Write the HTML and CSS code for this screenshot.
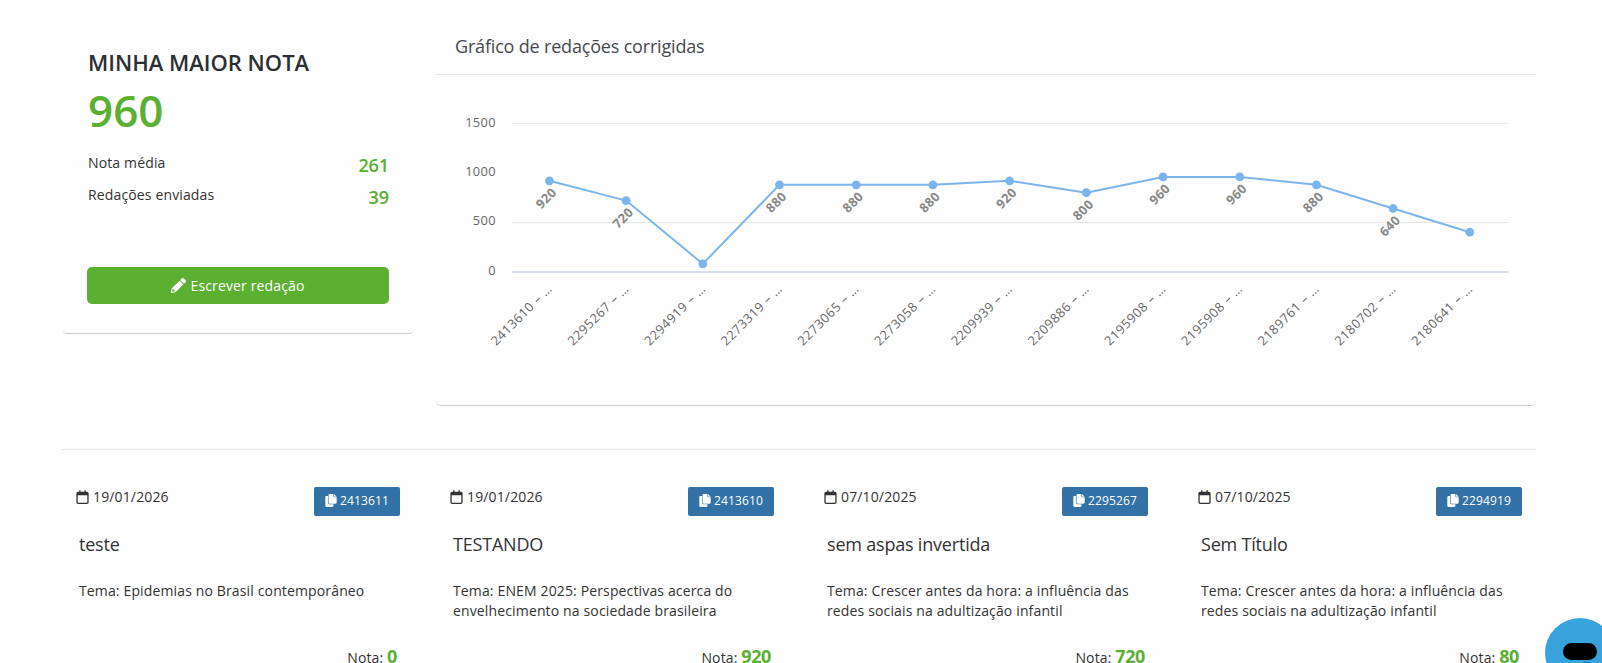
FILE: index.html
```
<!DOCTYPE html>
<html lang="pt-BR">
<head>
  <meta charset="UTF-8">
  <title>Minhas redações</title>
  <meta name="viewport" content="width=device-width, initial-scale=1.0">
  <link rel="stylesheet" href="styles.css">
</head>
<body>

<svg class="sprite" width="0" height="0">
  <symbol id="i-calendar" viewBox="0 0 448 512">
    <path fill-rule="evenodd" d="M128 0c13 0 24 11 24 24v40h144V24c0-13 11-24 24-24s24 11 24 24v40h40c35 0 64 29 64 64v320c0 35-29 64-64 64H64c-35 0-64-29-64-64V128c0-35 29-64 64-64h40V24c0-13 11-24 24-24zM400 192H48v256c0 9 7 16 16 16h320c9 0 16-7 16-16z"/>
  </symbol>
  <symbol id="i-copy" viewBox="0 0 448 512">
    <path d="M176 0h144v96c0 18 14 32 32 32h96v208c0 26-22 48-48 48H176c-26 0-48-22-48-48V48c0-26 22-48 48-48zM344 0l104 104h-104z"/>
    <path d="M48 80h56v256c0 40 32 72 72 72h144v56c0 26-22 48-48 48H48c-26 0-48-22-48-48V128c0-26 22-48 48-48z"/>
  </symbol>
  <symbol id="i-pencil" viewBox="0 0 512 512">
    <path d="M498 142l-46 46c-5 5-12 5-17 0L324 77c-5-5-5-12 0-17l46-46c19-19 49-19 68 0l60 60c19 19 19 49 0 68zM284 100L22 362 0 484c-3 16 12 31 28 28l122-22 262-262c5-5 5-12 0-17L301 100c-5-5-12-5-17 0zM88 424h48v36l-65 11-30-30 11-65h36z"/>
  </symbol>
</svg>

<div class="container">

  <div class="top">
    <!-- Resumo das notas -->
    <section class="card summary">
      <h2 class="summary-title">MINHA MAIOR NOTA</h2>
      <div class="summary-score">960</div>
      <div class="summary-row">
        <span>Nota média</span>
        <strong>261</strong>
      </div>
      <div class="summary-row">
        <span>Redações enviadas</span>
        <strong>39</strong>
      </div>
      <a class="btn-write" href="#"><svg class="icon-pencil"><use href="#i-pencil"/></svg>Escrever redação</a>
    </section>

    <!-- Gráfico -->
    <section class="card chart-card">
      <h3 class="chart-title">Gráfico de redações corrigidas</h3>
      <svg class="chart" viewBox="0 0 1100 330" width="1100" height="330">
        <g class="grid">
          <path d="M76 48.5H1072M76 147.5H1072"/>
          <path class="axis" d="M76 197H1073"/>
        </g>
        <g class="y-labels">
          <text x="60" y="52">1500</text>
          <text x="60" y="101">1000</text>
          <text x="60" y="150">500</text>
          <text x="60" y="200">0</text>
        </g>
        <polyline class="line" points="113.4,105.8 190.1,125.6 266.8,188.9 343.5,109.8 420.2,109.8 496.9,109.8 573.6,105.8 650.3,117.7 727,101.9 803.7,101.9 880.4,109.8 957.1,133.5 1033.8,157.2"/>
        <g class="points">
          <circle cx="113.4" cy="105.8" r="4.4"/>
          <circle cx="190.1" cy="125.6" r="4.4"/>
          <circle cx="266.8" cy="188.9" r="4.4"/>
          <circle cx="343.5" cy="109.8" r="4.4"/>
          <circle cx="420.2" cy="109.8" r="4.4"/>
          <circle cx="496.9" cy="109.8" r="4.4"/>
          <circle cx="573.6" cy="105.8" r="4.4"/>
          <circle cx="650.3" cy="117.7" r="4.4"/>
          <circle cx="727" cy="101.9" r="4.4"/>
          <circle cx="803.7" cy="101.9" r="4.4"/>
          <circle cx="880.4" cy="109.8" r="4.4"/>
          <circle cx="957.1" cy="133.5" r="4.4"/>
          <circle cx="1033.8" cy="157.2" r="4.4"/>
        </g>
        <g class="values">
          <text transform="translate(121.4 118.3) rotate(-45)">920</text>
          <text transform="translate(198.1 138.1) rotate(-45)">720</text>
          <text transform="translate(351.5 122.3) rotate(-45)">880</text>
          <text transform="translate(428.2 122.3) rotate(-45)">880</text>
          <text transform="translate(504.9 122.3) rotate(-45)">880</text>
          <text transform="translate(581.6 118.3) rotate(-45)">920</text>
          <text transform="translate(658.3 130.2) rotate(-45)">800</text>
          <text transform="translate(735 114.4) rotate(-45)">960</text>
          <text transform="translate(811.7 114.4) rotate(-45)">960</text>
          <text transform="translate(888.4 122.3) rotate(-45)">880</text>
          <text transform="translate(965.1 146) rotate(-45)">640</text>
        </g>
        <g class="x-labels">
          <text transform="translate(117 214.5) rotate(-45)">2413610 – …</text>
          <text transform="translate(193.7 214.5) rotate(-45)">2295267 – …</text>
          <text transform="translate(270.4 214.5) rotate(-45)">2294919 – …</text>
          <text transform="translate(347.1 214.5) rotate(-45)">2273319 – …</text>
          <text transform="translate(423.8 214.5) rotate(-45)">2273065 – …</text>
          <text transform="translate(500.5 214.5) rotate(-45)">2273058 – …</text>
          <text transform="translate(577.2 214.5) rotate(-45)">2209939 – …</text>
          <text transform="translate(653.9 214.5) rotate(-45)">2209886 – …</text>
          <text transform="translate(730.6 214.5) rotate(-45)">2195908 – …</text>
          <text transform="translate(807.3 214.5) rotate(-45)">2195908 – …</text>
          <text transform="translate(884 214.5) rotate(-45)">2189761 – …</text>
          <text transform="translate(960.7 214.5) rotate(-45)">2180702 – …</text>
          <text transform="translate(1037.4 214.5) rotate(-45)">2180641 – …</text>
        </g>
      </svg>
    </section>
  </div>

  <hr class="divider">

  <!-- Redações -->
  <div class="essays">
    <article class="essay">
      <header class="essay-head">
        <span class="essay-date"><svg class="icon-cal"><use href="#i-calendar"/></svg>19/01/2026</span>
        <a class="essay-id" href="#"><svg class="icon-copy"><use href="#i-copy"/></svg>2413611</a>
      </header>
      <h4 class="essay-title">teste</h4>
      <p class="essay-theme">Tema: Epidemias no Brasil contemporâneo</p>
      <div class="essay-score">Nota: <strong>0</strong></div>
    </article>

    <article class="essay">
      <header class="essay-head">
        <span class="essay-date"><svg class="icon-cal"><use href="#i-calendar"/></svg>19/01/2026</span>
        <a class="essay-id" href="#"><svg class="icon-copy"><use href="#i-copy"/></svg>2413610</a>
      </header>
      <h4 class="essay-title">TESTANDO</h4>
      <p class="essay-theme">Tema: ENEM 2025: Perspectivas acerca do envelhecimento na sociedade brasileira</p>
      <div class="essay-score">Nota: <strong>920</strong></div>
    </article>

    <article class="essay">
      <header class="essay-head">
        <span class="essay-date"><svg class="icon-cal"><use href="#i-calendar"/></svg>07/10/2025</span>
        <a class="essay-id" href="#"><svg class="icon-copy"><use href="#i-copy"/></svg>2295267</a>
      </header>
      <h4 class="essay-title">sem aspas invertida</h4>
      <p class="essay-theme">Tema: Crescer antes da hora: a influência das redes sociais na adultização infantil</p>
      <div class="essay-score">Nota: <strong>720</strong></div>
    </article>

    <article class="essay">
      <header class="essay-head">
        <span class="essay-date"><svg class="icon-cal"><use href="#i-calendar"/></svg>07/10/2025</span>
        <a class="essay-id" href="#"><svg class="icon-copy"><use href="#i-copy"/></svg>2294919</a>
      </header>
      <h4 class="essay-title">Sem Título</h4>
      <p class="essay-theme">Tema: Crescer antes da hora: a influência das redes sociais na adultização infantil</p>
      <div class="essay-score">Nota: <strong>80</strong></div>
    </article>
  </div>

</div>

<!-- Assistente virtual -->
<button class="assistant" aria-label="Assistente">
  <svg viewBox="0 0 70 70" width="70" height="70">
    <circle cx="35" cy="35" r="35" fill="#37a2db"/>
    <rect x="18" y="25" width="34" height="17" rx="8.5"/>
    <rect x="38" y="44" width="8" height="3" rx="1.5" fill="#2b6c92"/>
  </svg>
</button>

</body>
</html>
```

FILE: styles.css
```
:root {
  --bg: #fefefe;
  --green: #5bb031;
  --blue: #3272a6;
  --text: #333;
  --line: #e7e7e7;
}

* { box-sizing: border-box; }

body {
  margin: 0;
  height: 663px;
  overflow: hidden;
  background: var(--bg);
  color: var(--text);
  font-family: "Open Sans", "Noto Sans", sans-serif;
  font-size: 14px;
  line-height: 20px;
  letter-spacing: 0.14px;
}

a { text-decoration: none; }

svg { fill: currentColor; }

.sprite { position: absolute; }

.container {
  width: 1474px;
  margin-left: 62px;
}

.top {
  display: flex;
  align-items: flex-start;
  gap: 22px;
}

.card {
  border: 0 solid #ccc;
  border-bottom-width: 1px;
  border-radius: 5px;
}

/* Resumo */

.summary {
  width: 352px;
  height: 334px;
  padding: 47px 25px 0;
}

.summary-title {
  margin: 0;
  padding-left: 1px;
  font-size: 22px;
  font-weight: 600;
  line-height: 30px;
  letter-spacing: 0;
  color: #2c2f33;
}

.summary-score {
  margin-top: 3px;
  padding-left: 1px;
  font-size: 44px;
  font-weight: 600;
  line-height: 60px;
  letter-spacing: 0;
  color: var(--green);
}

.summary-row {
  display: flex;
  justify-content: space-between;
  height: 32px;
  padding-left: 1px;
}

.summary-score + .summary-row { margin-top: 13px; }

.summary-row strong {
  padding-top: 2px;
  font-size: 18px;
  font-weight: 600;
  letter-spacing: -0.1px;
  color: var(--green);
}

.btn-write {
  display: flex;
  align-items: center;
  justify-content: center;
  gap: 4px;
  height: 37px;
  margin-top: 50px;
  border-radius: 5px;
  background: var(--green);
  color: #fff;
}

.icon-pencil {
  width: 15px;
  height: 15px;
}

/* Gráfico */

.chart-card {
  width: 1100px;
}

.chart-title {
  height: 75px;
  margin: 0;
  padding: 34px 19px 0;
  border-bottom: 1px solid var(--line);
  font-size: 18px;
  font-weight: 400;
  line-height: 25px;
  letter-spacing: -0.18px;
  color: #464a50;
}

.chart { display: block; }

.grid path {
  fill: none;
  stroke: #e6e6e6;
}

.grid .axis {
  stroke: #d9deeb;
  stroke-width: 2;
}

.line {
  fill: none;
  stroke: #7cb5ec;
  stroke-width: 2;
  stroke-linejoin: round;
}

.points { fill: #7cb5ec; }

.y-labels,
.x-labels {
  fill: #666;
  font-size: 12.8px;
  letter-spacing: 0.4px;
  text-anchor: end;
}

.x-labels { letter-spacing: 0.55px; }

.values {
  fill: #888;
  font-size: 12.8px;
  font-weight: 700;
  letter-spacing: 0.3px;
  text-anchor: end;
  stroke: var(--bg);
  stroke-width: 2px;
  paint-order: stroke;
}

/* Lista de redações */

.divider {
  height: 1px;
  margin: 43px 0 37px;
  border: 0;
  background: #e6e6e6;
}

.essays {
  display: grid;
  grid-template-columns: repeat(4, 324px);
  gap: 50px;
  padding-left: 14px;
}

.essay-head {
  display: flex;
  justify-content: space-between;
  height: 29px;
}

.essay-date {
  display: flex;
  align-items: center;
  gap: 4px;
  height: 20px;
}

.icon-cal {
  width: 13px;
  height: 14px;
}

.essay-id {
  display: flex;
  align-items: center;
  gap: 3px;
  width: 86px;
  height: 29px;
  padding: 0 0 2px 11px;
  border-radius: 2px;
  background: var(--blue);
  color: #fff;
  font-size: 12px;
  letter-spacing: 0.15px;
}

.icon-copy {
  width: 12px;
  height: 13px;
}

.essay-title {
  margin: 16px 0 0 3px;
  font-size: 18px;
  font-weight: 400;
  line-height: 25px;
  letter-spacing: -0.2px;
}

.essay-theme {
  height: 40px;
  margin: 24px 12px 0 3px;
}

.essay-score {
  margin-top: 25px;
  padding-right: 3px;
  text-align: right;
}

.essay-score strong {
  font-size: 18px;
  font-weight: 700;
  letter-spacing: -0.4px;
  color: var(--green);
}

.assistant {
  position: fixed;
  top: 618px;
  left: 1545px;
  padding: 0;
  border: 0;
  background: none;
}

.assistant svg {
  display: block;
  fill: #000;
}
```
